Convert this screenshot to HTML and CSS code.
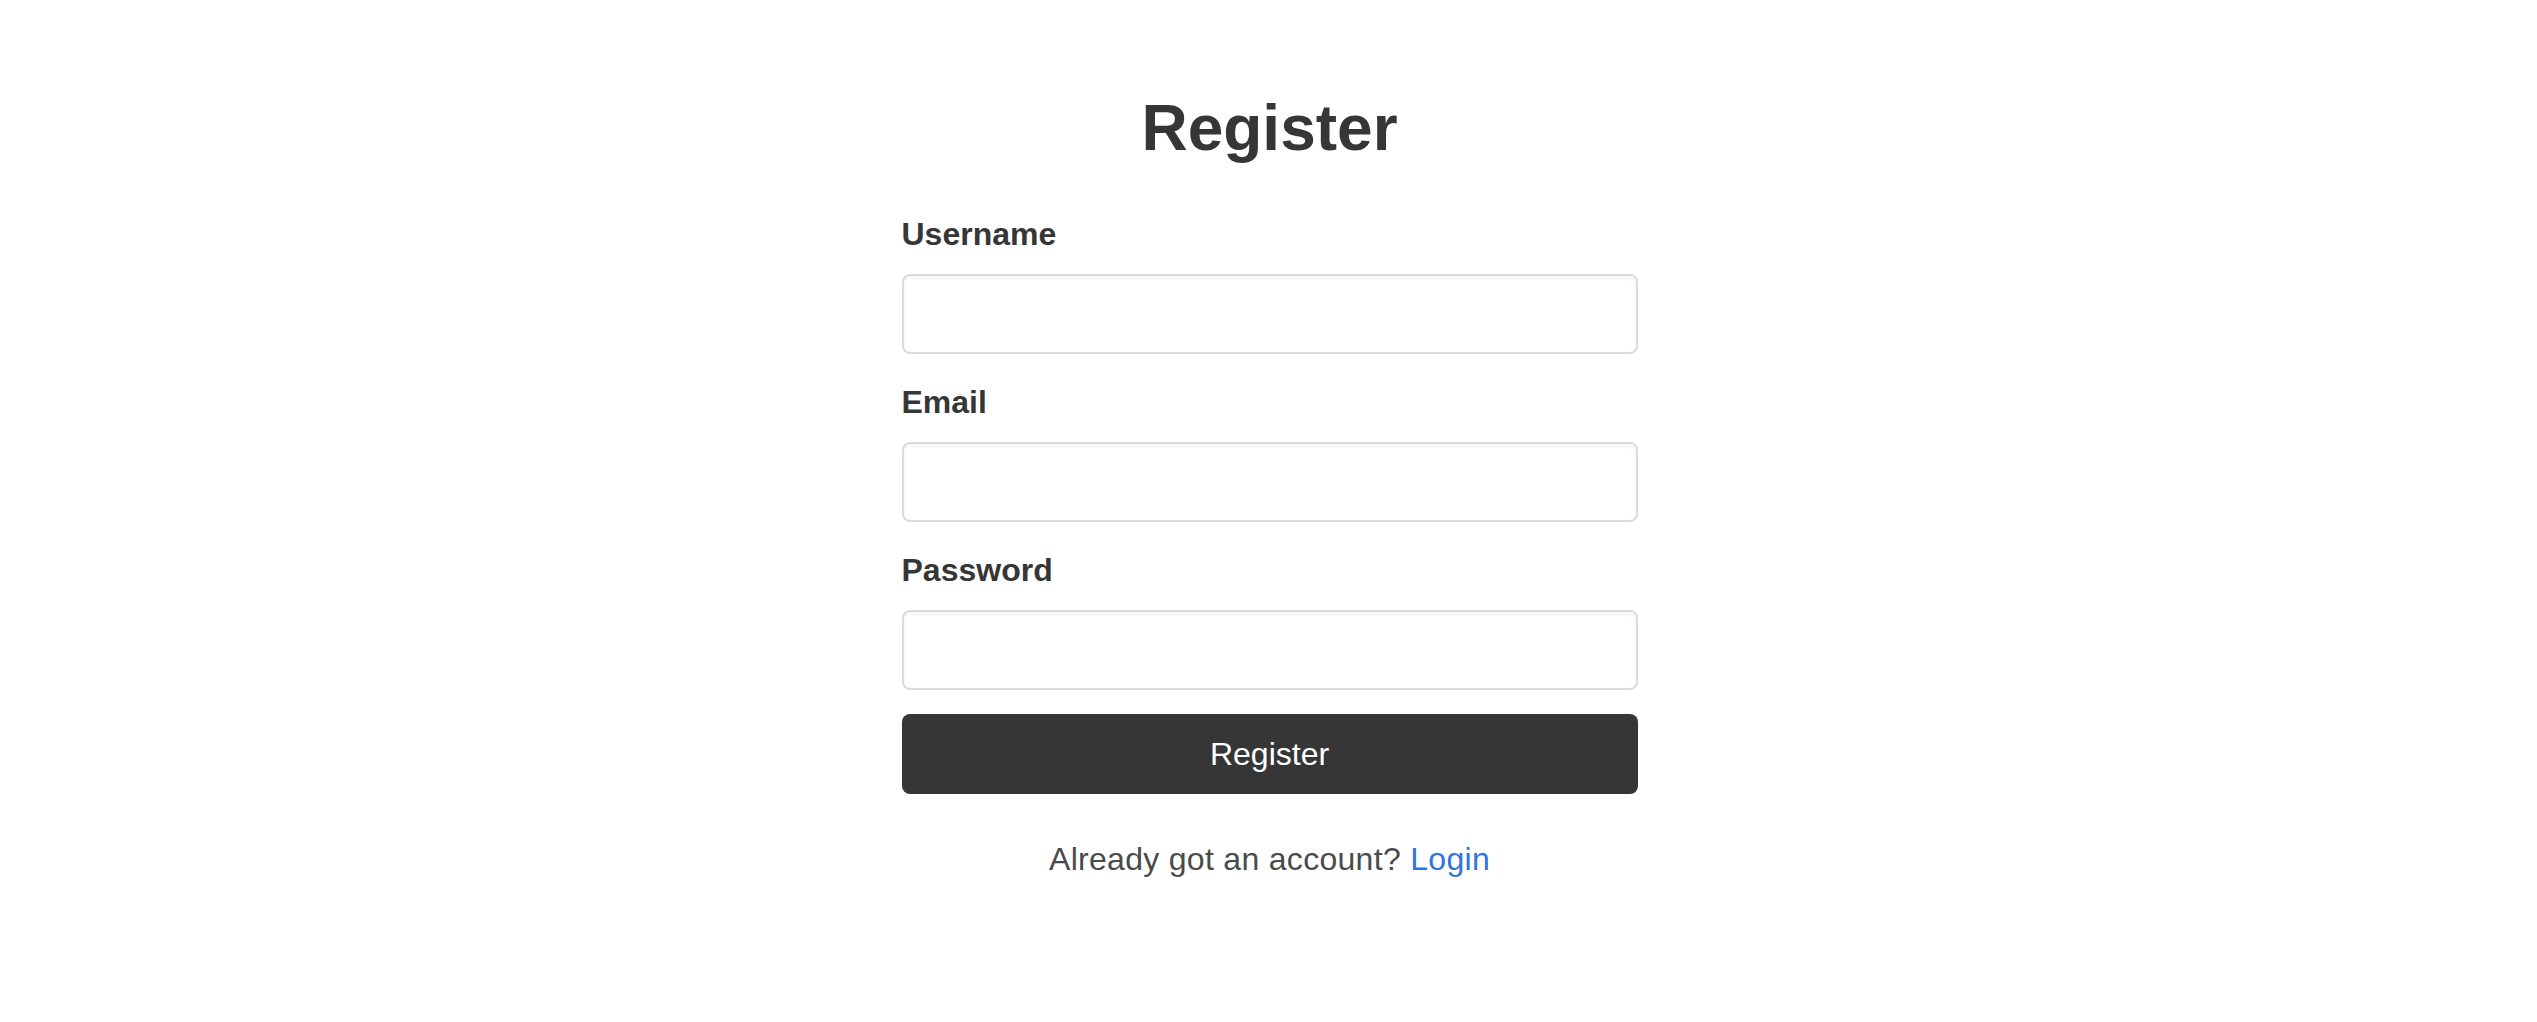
FILE: index.html
```html
<!DOCTYPE html>
<html lang="en">
<head>
    <meta charset="UTF-8">
    <meta name="viewport" content="width=device-width, initial-scale=1.0">
    <title>Register</title>
    <link rel="stylesheet" href="styles.css">
</head>
<body>
    <div class="container">
        <h1 class="title">Register</h1>

        <form class="register-form" onsubmit="return false;">
            <div class="field">
                <label class="label" for="username">Username</label>
                <input type="text" id="username" class="input">
            </div>

            <div class="field">
                <label class="label" for="email">Email</label>
                <input type="email" id="email" class="input">
            </div>

            <div class="field">
                <label class="label" for="password">Password</label>
                <input type="password" id="password" class="input">
            </div>

            <button type="submit" class="btn-register">Register</button>
        </form>

        <p class="switch-auth">Already got an account? <a href="#">Login</a></p>
    </div>
</body>
</html>
```

FILE: styles.css
```css
* {
    margin: 0;
    padding: 0;
    box-sizing: border-box;
}

body {
    font-family: 'Liberation Sans', Arial, Helvetica, sans-serif;
    line-height: 1.5;
    color: #4a4a4a;
    background: white;
    padding: 92px 0 0 2px;
}

.container {
    width: 736px;
    margin: 0 auto;
}

.title {
    font-size: 64px;
    font-weight: 700;
    line-height: 1.125;
    color: #363636;
    text-align: center;
    margin-bottom: 46px;
}

.field {
    margin-bottom: 24px;
}

.label {
    display: block;
    font-size: 32px;
    font-weight: 700;
    color: #363636;
    margin-bottom: 16px;
}

.input {
    display: block;
    width: 100%;
    height: 80px;
    padding: 0 22px;
    font-family: inherit;
    font-size: 32px;
    color: #363636;
    background: white;
    border: 2px solid #dbdbdb;
    border-radius: 8px;
    box-shadow: inset 0 2px 4px rgba(10, 10, 10, 0.05);
}

.input:focus {
    outline: none;
    border-color: #3273dc;
}

.btn-register {
    display: block;
    width: 100%;
    height: 80px;
    font-family: inherit;
    font-size: 32px;
    color: white;
    background: #363636;
    border: none;
    border-radius: 8px;
    cursor: pointer;
}

.btn-register:hover {
    background: #2f2f2f;
}

.switch-auth {
    margin-top: 41px;
    font-size: 32px;
    letter-spacing: 0.3px;
    text-align: center;
}

.switch-auth a {
    color: #3273dc;
    text-decoration: none;
}
```
